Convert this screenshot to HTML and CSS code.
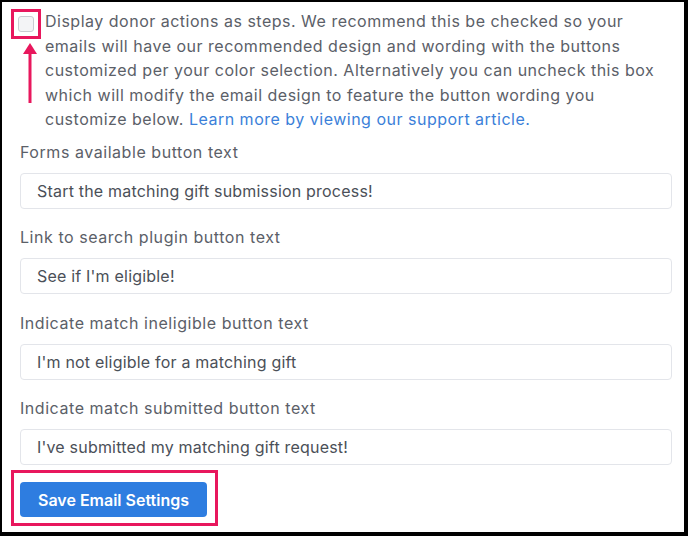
FILE: index.html
```html
<!DOCTYPE html>
<html>
<head>
<meta charset="utf-8">
<link rel="stylesheet" href="styles.css">
</head>
<body>
<div class="frame">
  <div class="intro">
    <div class="check-mark">
      <span class="checkbox"></span>
    </div>
    <p class="intro-text">Display donor actions as steps. We recommend this be checked so your emails will have our recommended design and wording with the buttons customized per your color selection. Alternatively you can uncheck this box which will modify the email design to feature the button wording you customize below. <a class="link" href="#">Learn more by viewing our support article.</a></p>
    <svg class="arrow" width="16" height="62" viewBox="0 0 16 62">
      <polygon points="8,0 1,11 15,11" fill="#e8175d"/>
      <line x1="8" y1="8" x2="8" y2="60" stroke="#e8175d" stroke-width="3"/>
    </svg>
  </div>
  <div class="fields">
    <div class="field">
      <label class="label">Forms available button text</label>
      <div class="input">Start the matching gift submission process!</div>
    </div>
    <div class="field">
      <label class="label">Link to search plugin button text</label>
      <div class="input">See if I'm eligible!</div>
    </div>
    <div class="field">
      <label class="label">Indicate match ineligible button text</label>
      <div class="input">I'm not eligible for a matching gift</div>
    </div>
    <div class="field">
      <label class="label">Indicate match submitted button text</label>
      <div class="input">I've submitted my matching gift request!</div>
    </div>
  </div>
  <div class="save-mark">
    <button class="save">Save Email Settings</button>
  </div>
</div>
</body>
</html>
```
FILE: styles.css
```css
html, body {
  margin: 0;
  padding: 0;
  background: #fff;
}
.frame {
  width: 688px;
  height: 536px;
  box-sizing: border-box;
  border-style: solid;
  border-color: #000;
  border-width: 2px 4px 4px 2px;
  background: #fff;
  padding: 7px 12px 0 9px;
  font-family: Inter, "Noto Sans", sans-serif;
  color: #5b6068;
  font-size: 16px;
  position: relative;
}
.intro {
  display: flex;
  align-items: flex-start;
  position: relative;
}
.check-mark {
  border: 3px solid #e8175d;
  padding: 4px;
  width: 16px;
  height: 16px;
  flex: none;
}
.checkbox {
  display: block;
  width: 14px;
  height: 14px;
  border: 1px solid #c9ccd1;
  border-radius: 3px;
  background: #f3f4f6;
}
.intro-text {
  margin: 0 0 0 4px;
  max-width: 625px;
  line-height: 24.5px;
  letter-spacing: 0.5px;
}
.link {
  color: #3b7fd9;
  text-decoration: none;
}
.arrow {
  position: absolute;
  left: 11px;
  top: 34px;
}
.fields {
  margin-top: 8px;
  padding-left: 9px;
  display: flex;
  flex-direction: column;
  gap: 16.5px;
}
.field {
  display: flex;
  flex-direction: column;
}
.label {
  line-height: 24px;
  margin-bottom: 9px;
  letter-spacing: 0.55px;
}
.input {
  height: 36px;
  box-sizing: border-box;
  border: 1px solid #e3e5ea;
  border-radius: 4px;
  padding-left: 16px;
  display: flex;
  align-items: center;
  color: #4b5058;
  letter-spacing: 0.2px;
}
.save-mark {
  display: inline-block;
  margin-top: 5px;
  border: 3px solid #e8175d;
  padding: 9px 8px 6px 6px;
}
.save {
  display: block;
  width: 187px;
  height: 35px;
  border: none;
  border-radius: 4px;
  background: #2e7de0;
  color: #fff;
  font-family: Inter, "Noto Sans", sans-serif;
  font-size: 16px;
  font-weight: 600;
  padding: 0;
}
```
